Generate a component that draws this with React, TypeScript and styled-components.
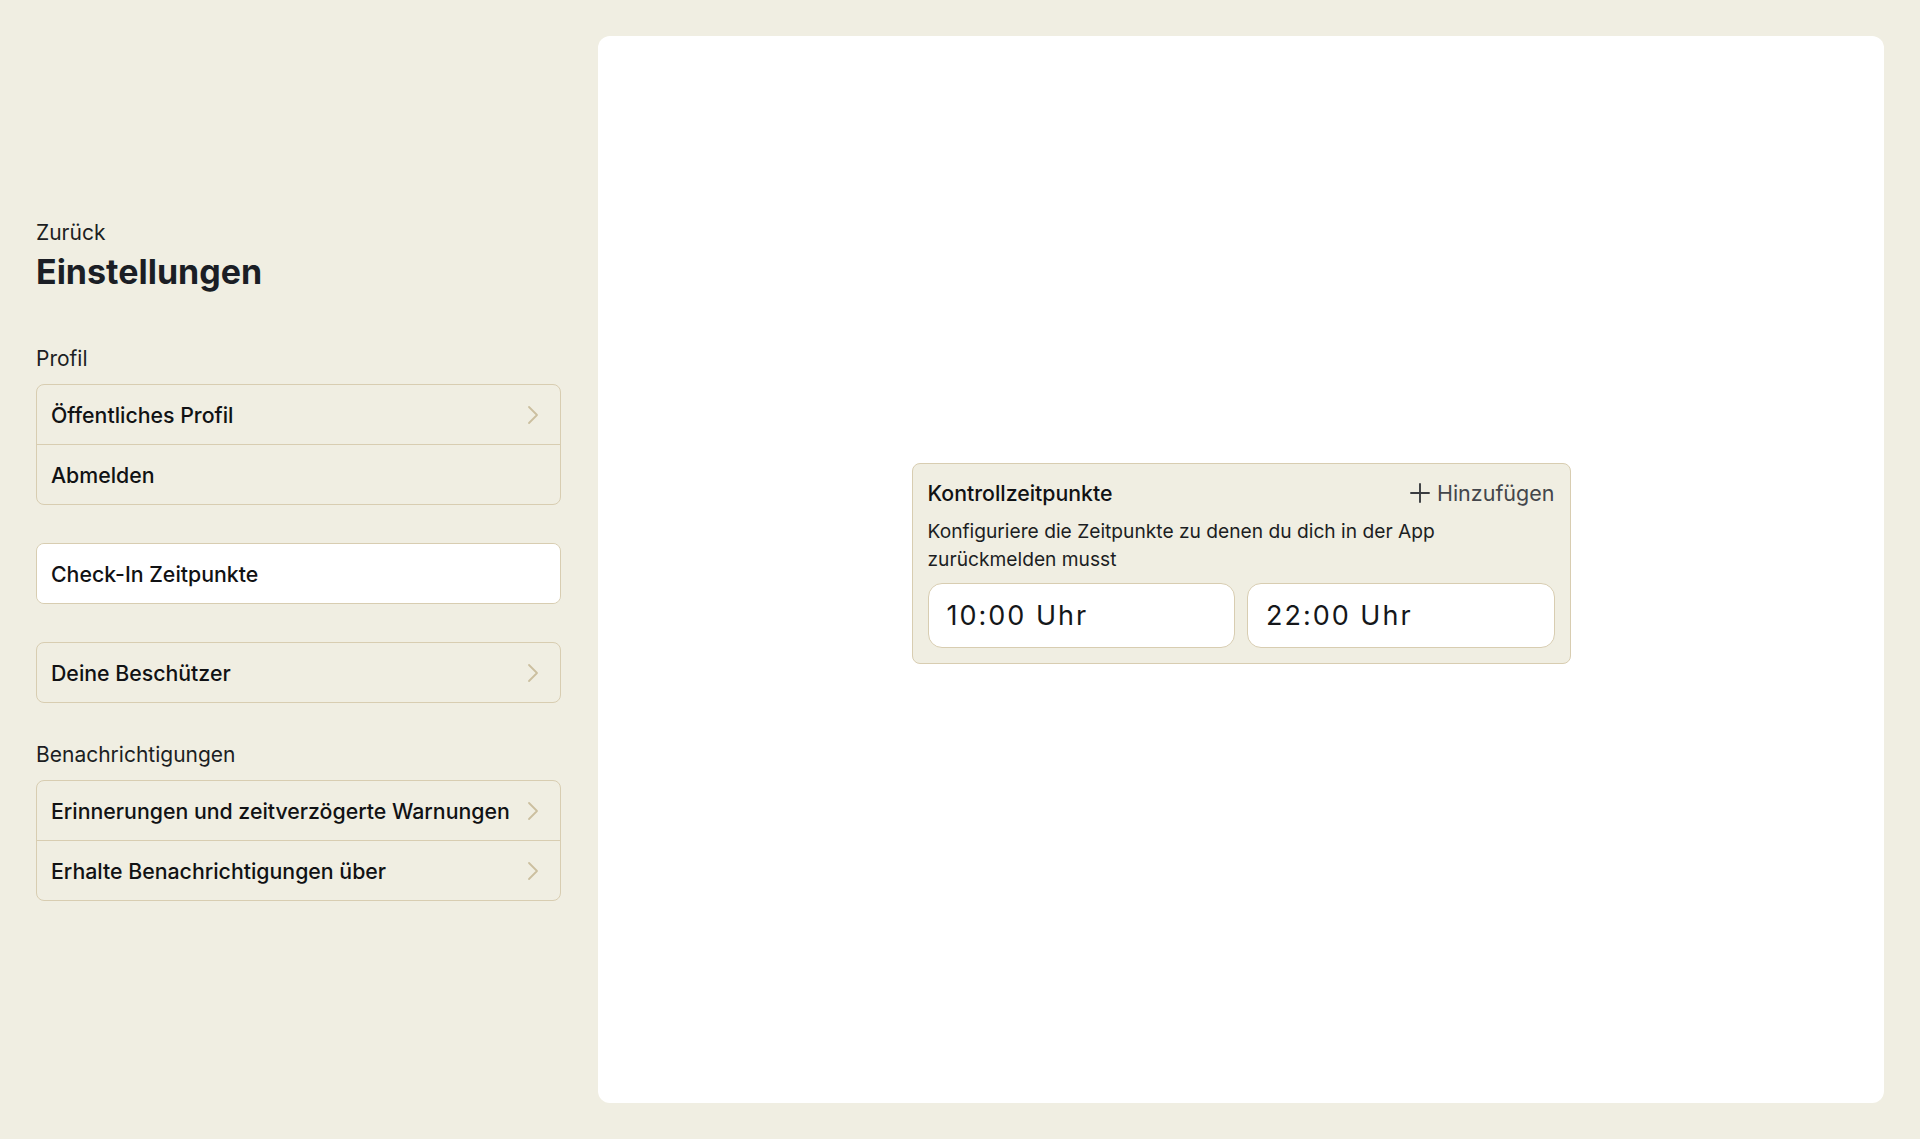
import React from "react";
import styled, { createGlobalStyle } from "styled-components";

const GlobalStyle = createGlobalStyle`
  html, body {
    margin: 0;
    padding: 0;
    background: #f0eee2;
    font-family: Inter, "Noto Sans", "Liberation Sans", sans-serif;
    color: #111214;
  }
  * { box-sizing: border-box; }
`;

const Page = styled.div`
  display: flex;
  gap: 37px;
  height: 100vh;
  padding: 36px;
  background: #f0eee2;
`;

const Sidebar = styled.aside`
  display: flex;
  flex-direction: column;
  width: 525px;
  flex-shrink: 0;
  padding-top: 183px;
`;

const BackLink = styled.a`
  font-size: 21px;
  line-height: 28px;
  color: #1c1e22;
  cursor: pointer;
`;

const Title = styled.h1`
  margin: 6px 0 54px;
  font-size: 34px;
  line-height: 38px;
  font-weight: 700;
  color: #1b1e25;
`;

const Section = styled.section`
  display: flex;
  flex-direction: column;
  gap: 11px;
  & + & {
    margin-top: 38px;
  }
`;

const SectionLabel = styled.div`
  font-size: 21px;
  line-height: 28px;
  color: #1c1e22;
`;

const Group = styled.div`
  display: flex;
  flex-direction: column;
  border: 1px solid #d8cdb1;
  border-radius: 8px;
  overflow: hidden;
`;

const Row = styled.div<{ $active?: boolean }>`
  display: flex;
  align-items: center;
  justify-content: space-between;
  height: 59px;
  padding: 0 20px 0 14px;
  font-size: 21.3px;
  font-weight: 500;
  color: #111214;
  background: ${(p) => (p.$active ? "#ffffff" : "transparent")};
  cursor: pointer;
  & + & {
    height: 60px;
    border-top: 1px solid #d8cdb1;
  }
`;

const Main = styled.main`
  flex: 1;
  display: flex;
  align-items: center;
  justify-content: center;
  padding-bottom: 13px;
  background: #ffffff;
  border-radius: 12px;
`;

const Card = styled.div`
  width: 659px;
  padding: 15px;
  background: #f0eee2;
  border: 1px solid #d8cdb1;
  border-radius: 8px;
`;

const CardHeader = styled.div`
  display: flex;
  align-items: center;
  justify-content: space-between;
  height: 28px;
`;

const CardTitle = styled.div`
  font-size: 21.3px;
  font-weight: 500;
  color: #111214;
`;

const AddButton = styled.button`
  display: flex;
  align-items: center;
  gap: 6px;
  padding: 0;
  border: none;
  background: none;
  font-family: inherit;
  font-size: 21.5px;
  color: #44464b;
  cursor: pointer;
`;

const Description = styled.p`
  margin: 10px 0 10px;
  font-size: 19.2px;
  line-height: 28px;
  color: #1c1e22;
`;

const Times = styled.div`
  display: grid;
  grid-template-columns: 1fr 1fr;
  gap: 12px;
`;

const TimeBox = styled.div`
  display: flex;
  align-items: center;
  height: 65px;
  padding: 0 18px;
  background: #ffffff;
  border: 1px solid #d8cdb1;
  border-radius: 14px;
  font-size: 27px;
  font-weight: 400;
  letter-spacing: 2px;
  color: #15171a;
`;

const Chevron = () => (
  <svg width="14" height="20" viewBox="0 0 14 20" fill="none">
    <polyline
      points="3,2 11,10 3,18"
      stroke="#cbbf9f"
      strokeWidth="1.8"
      strokeLinecap="round"
      strokeLinejoin="round"
    />
  </svg>
);

const Plus = () => (
  <svg width="22" height="22" viewBox="0 0 22 22" fill="none">
    <path d="M11 2v18M2 11h18" stroke="#3a3c40" strokeWidth="1.9" strokeLinecap="round" />
  </svg>
);

export default function App() {
  return (
    <>
      <GlobalStyle />
      <Page>
        <Sidebar>
          <BackLink>Zurück</BackLink>
          <Title>Einstellungen</Title>

          <Section>
            <SectionLabel>Profil</SectionLabel>
            <Group>
              <Row>
                Öffentliches Profil
                <Chevron />
              </Row>
              <Row>Abmelden</Row>
            </Group>
          </Section>

          <Section>
            <Group>
              <Row $active>Check-In Zeitpunkte</Row>
            </Group>
          </Section>

          <Section>
            <Group>
              <Row>
                Deine Beschützer
                <Chevron />
              </Row>
            </Group>
          </Section>

          <Section>
            <SectionLabel>Benachrichtigungen</SectionLabel>
            <Group>
              <Row>
                Erinnerungen und zeitverzögerte Warnungen
                <Chevron />
              </Row>
              <Row>
                Erhalte Benachrichtigungen über
                <Chevron />
              </Row>
            </Group>
          </Section>
        </Sidebar>

        <Main>
          <Card>
            <CardHeader>
              <CardTitle>Kontrollzeitpunkte</CardTitle>
              <AddButton>
                <Plus />
                Hinzufügen
              </AddButton>
            </CardHeader>
            <Description>
              Konfiguriere die Zeitpunkte zu denen du dich in der App
              <br />
              zurückmelden musst
            </Description>
            <Times>
              <TimeBox>10:00 Uhr</TimeBox>
              <TimeBox>22:00 Uhr</TimeBox>
            </Times>
          </Card>
        </Main>
      </Page>
    </>
  );
}
